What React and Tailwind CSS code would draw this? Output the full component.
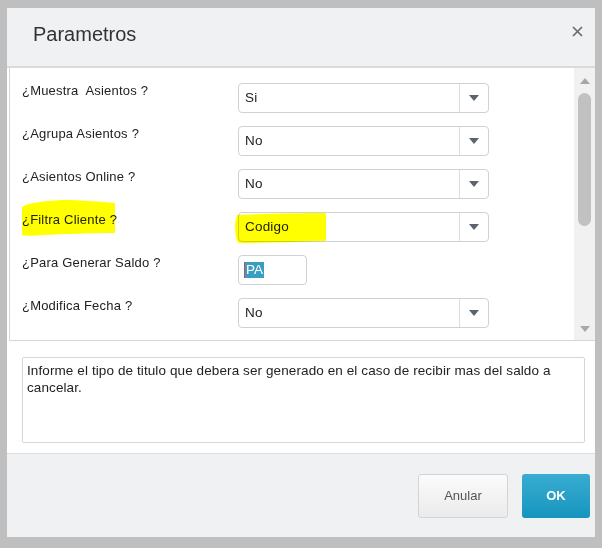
import React from "react";

const rows = [
  { label: "¿Muestra  Asientos ?", type: "select", value: "Si" },
  { label: "¿Agrupa Asientos ?", type: "select", value: "No" },
  { label: "¿Asientos Online ?", type: "select", value: "No" },
  { label: "¿Filtra Cliente ?", type: "select", value: "Codigo", marked: true },
  { label: "¿Para Generar Saldo ?", type: "text", value: "PA" },
  { label: "¿Modifica Fecha ?", type: "select", value: "No" },
];

const Caret = ({ up }) => (
  <svg width="10" height="6" viewBox="0 0 10 6" className="block">
    <path d={up ? "M0 6 L5 0 L10 6 Z" : "M0 0 L10 0 L5 6 Z"} fill="currentColor" />
  </svg>
);

const SelectBox = ({ value }) => (
  <div className="w-[251px] h-[30px] flex border border-[#cfd1d3] rounded-[4px] bg-white">
    <div className="flex-1 flex items-center pl-[6px] text-[13.5px] tracking-[0.2px] text-[#222]">
      {value}
    </div>
    <div className="w-[29px] flex items-center justify-center border-l border-[#dcdddf] text-[#5b6270]">
      <Caret />
    </div>
  </div>
);

const TextBox = ({ value }) => (
  <div className="w-[69px] h-[30px] flex items-center border border-[#cfd1d3] rounded-[4px] bg-white pl-[5px]">
    <span className="w-[1px] h-[16px] bg-[#c0504d]" />
    <span className="h-[16px] leading-[16px] px-[1px] bg-[#3b9dbf] text-white text-[13.5px]">
      {value}
    </span>
  </div>
);

// hand drawn highlighter strokes
const Marker = ({ className, d, w, h }) => (
  <svg
    width={w}
    height={h}
    viewBox={`0 0 ${w} ${h}`}
    className={`absolute mix-blend-multiply pointer-events-none ${className}`}
  >
    <path d={d} fill="#ffff00" />
  </svg>
);

const ParamRow = ({ row }) => (
  <div className="relative h-[43px] flex items-start">
    <div className="w-[216px] text-[13px] leading-[16px] tracking-[0.2px] text-[#222] whitespace-pre">
      {row.label}
    </div>
    {row.type === "select" ? <SelectBox value={row.value} /> : <TextBox value={row.value} />}
    {row.marked && (
      <>
        <Marker
          className="left-0 top-[-12px]"
          w={94}
          h={36}
          d="M0 7 C6 3 20 1 40 0 C60 0 80 2 93 3 L93 33 C70 33 40 34 22 35 C12 36 4 36 0 35 Z"
        />
        <Marker
          className="left-[213px] top-[1px]"
          w={92}
          h={30}
          d="M2 2 C20 1 60 0 91 0 L91 28 C60 29 30 30 4 30 C1 29 0 20 0 10 Z"
        />
      </>
    )}
  </div>
);

const App = () => {
  return (
    <div className="w-[602px] h-[548px] bg-[#bfbfbf] pt-[8px] pl-[7px] pr-[7px] pb-[11px] font-['Liberation_Sans',Arial,sans-serif]">
      <div className="h-full flex flex-col bg-white">
        <div className="h-[60px] shrink-0 flex items-start justify-between bg-[#f0f1f2] border-b-2 border-[#d9dadb] pl-[26px] pr-[12px]">
          <h1 className="pt-[14px] text-[20px] leading-[24px] text-[#333]">Parametros</h1>
          <svg width="11" height="11" viewBox="0 0 11 11" className="mt-[18px] text-[#666d78]">
            <path d="M1 1 L10 10 M10 1 L1 10" stroke="currentColor" strokeWidth="1.7" />
          </svg>
        </div>

        <div className="h-[273px] shrink-0 ml-[2px] flex border-l border-b border-[#d6d7d8] overflow-hidden">
          <div className="flex-1 pl-[12px] pt-[15px]">
            {rows.map((row) => (
              <ParamRow key={row.label} row={row} />
            ))}
          </div>
          <div className="w-[21px] flex flex-col items-center bg-[#f1f1f1] text-[#a8a8a8] pt-[10px] pb-[8px]">
            <Caret up />
            <div className="mt-[9px] w-[13px] h-[133px] rounded-full bg-[#c1c1c1]" />
            <div className="mt-auto">
              <Caret />
            </div>
          </div>
        </div>

        <div className="mt-[16px] ml-[15px] mr-[10px] h-[86px] shrink-0 border border-[#d5d6d7] rounded-[2px] px-[4px] pt-[4px] text-[13.5px] leading-[17px] tracking-[0.1px] text-[#222]">
          Informe el tipo de titulo que debera ser generado en el caso de recibir mas del saldo a cancelar.
        </div>

        <div className="mt-auto h-[84px] shrink-0 flex items-center justify-end gap-[14px] pr-[5px] bg-[#f0f1f2] border-t border-[#dcdddf]">
          <button className="w-[90px] h-[44px] rounded-[3px] border border-[#d3d4d5] bg-gradient-to-b from-[#fbfbfb] to-[#ebebeb] text-[13px] text-[#555]">
            Anular
          </button>
          <button className="w-[68px] h-[44px] rounded-[3px] bg-gradient-to-b from-[#38acd1] to-[#1495be] text-[13px] font-bold text-white">
            OK
          </button>
        </div>
      </div>
    </div>
  );
};

export default App;
